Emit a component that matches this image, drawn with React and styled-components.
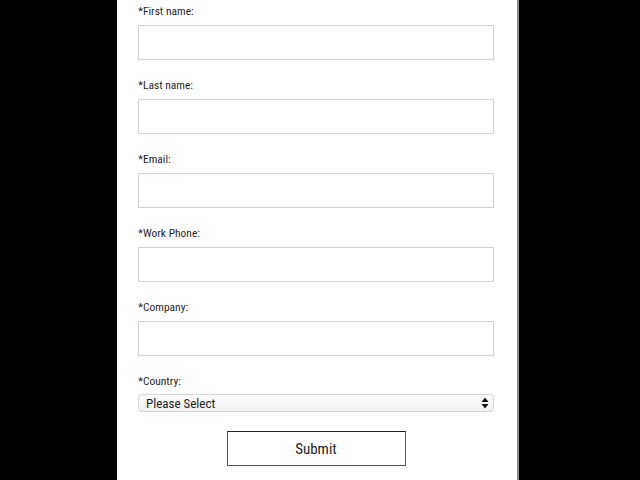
import React from "react";
import styled, { createGlobalStyle } from "styled-components";

const GlobalStyle = createGlobalStyle`
  html, body {
    margin: 0;
    padding: 0;
    background: #000;
    height: 100%;
  }
`;

const Page = styled.div`
  width: 640px;
  height: 480px;
  display: flex;
  background: #000;
  overflow: hidden;
`;

const Panel = styled.div`
  margin-left: 117px;
  width: 402px;
  height: 480px;
  background: #fff;
  border-right: 2px solid #8a8a8a;
  box-sizing: border-box;
  padding: 4px 0 0 21px;
  font-family: "Liberation Sans Narrow", "Roboto Condensed", Roboto, sans-serif;
  color: #1a1a1a;
`;

const Form = styled.form`
  display: flex;
  flex-direction: column;
  width: 356px;
`;

const Field = styled.div`
  display: flex;
  flex-direction: column;
  gap: 7px;
  margin-bottom: ${(p) => p.$spacing || 18}px;
`;

const Label = styled.label`
  font-size: 11.5px;
  line-height: 14px;
  height: 14px;
  color: #1f1f1f;
`;

const Input = styled.input`
  box-sizing: border-box;
  width: 100%;
  height: 35px;
  border: 1px solid #d3d3d3;
  background: #fff;
  margin: 0;
  outline: none;
`;

const SelectBox = styled.div`
  box-sizing: border-box;
  width: 100%;
  height: 18px;
  margin-top: -1px;
  border: 1px solid #d6d6d6;
  border-radius: 4px;
  background: linear-gradient(#fdfdfd, #f0f0f0);
  display: flex;
  align-items: center;
  justify-content: space-between;
  padding: 0 4px 0 7px;
  font-size: 13px;
  color: #222;
`;

const Arrows = styled.svg`
  width: 8px;
  height: 12px;
  display: block;
`;

const ButtonRow = styled.div`
  display: flex;
  justify-content: center;
`;

const SubmitButton = styled.button`
  box-sizing: border-box;
  width: 179px;
  height: 35px;
  background: #fff;
  border: 1px solid #555;
  border-top-color: #222;
  font-family: inherit;
  font-size: 15px;
  color: #222;
  cursor: pointer;
`;

const fields = [
  { id: "first", label: "*First name:" },
  { id: "last", label: "*Last name:" },
  { id: "email", label: "*Email:" },
  { id: "phone", label: "*Work Phone:" },
  { id: "company", label: "*Company:" },
];

export default function App() {
  return (
    <>
      <GlobalStyle />
      <Page>
        <Panel>
          <Form onSubmit={(e) => e.preventDefault()}>
            {fields.map((f) => (
              <Field key={f.id}>
                <Label htmlFor={f.id}>{f.label}</Label>
                <Input id={f.id} type="text" />
              </Field>
            ))}
            <Field $spacing={19}>
              <Label>*Country:</Label>
              <SelectBox>
                <span>Please Select</span>
                <Arrows viewBox="0 0 8 12">
                  <path d="M4 0.5 L7.5 5 L0.5 5 Z" fill="#111" />
                  <path d="M4 11.5 L7.5 7 L0.5 7 Z" fill="#111" />
                </Arrows>
              </SelectBox>
            </Field>
            <ButtonRow>
              <SubmitButton type="submit">Submit</SubmitButton>
            </ButtonRow>
          </Form>
        </Panel>
      </Page>
    </>
  );
}
